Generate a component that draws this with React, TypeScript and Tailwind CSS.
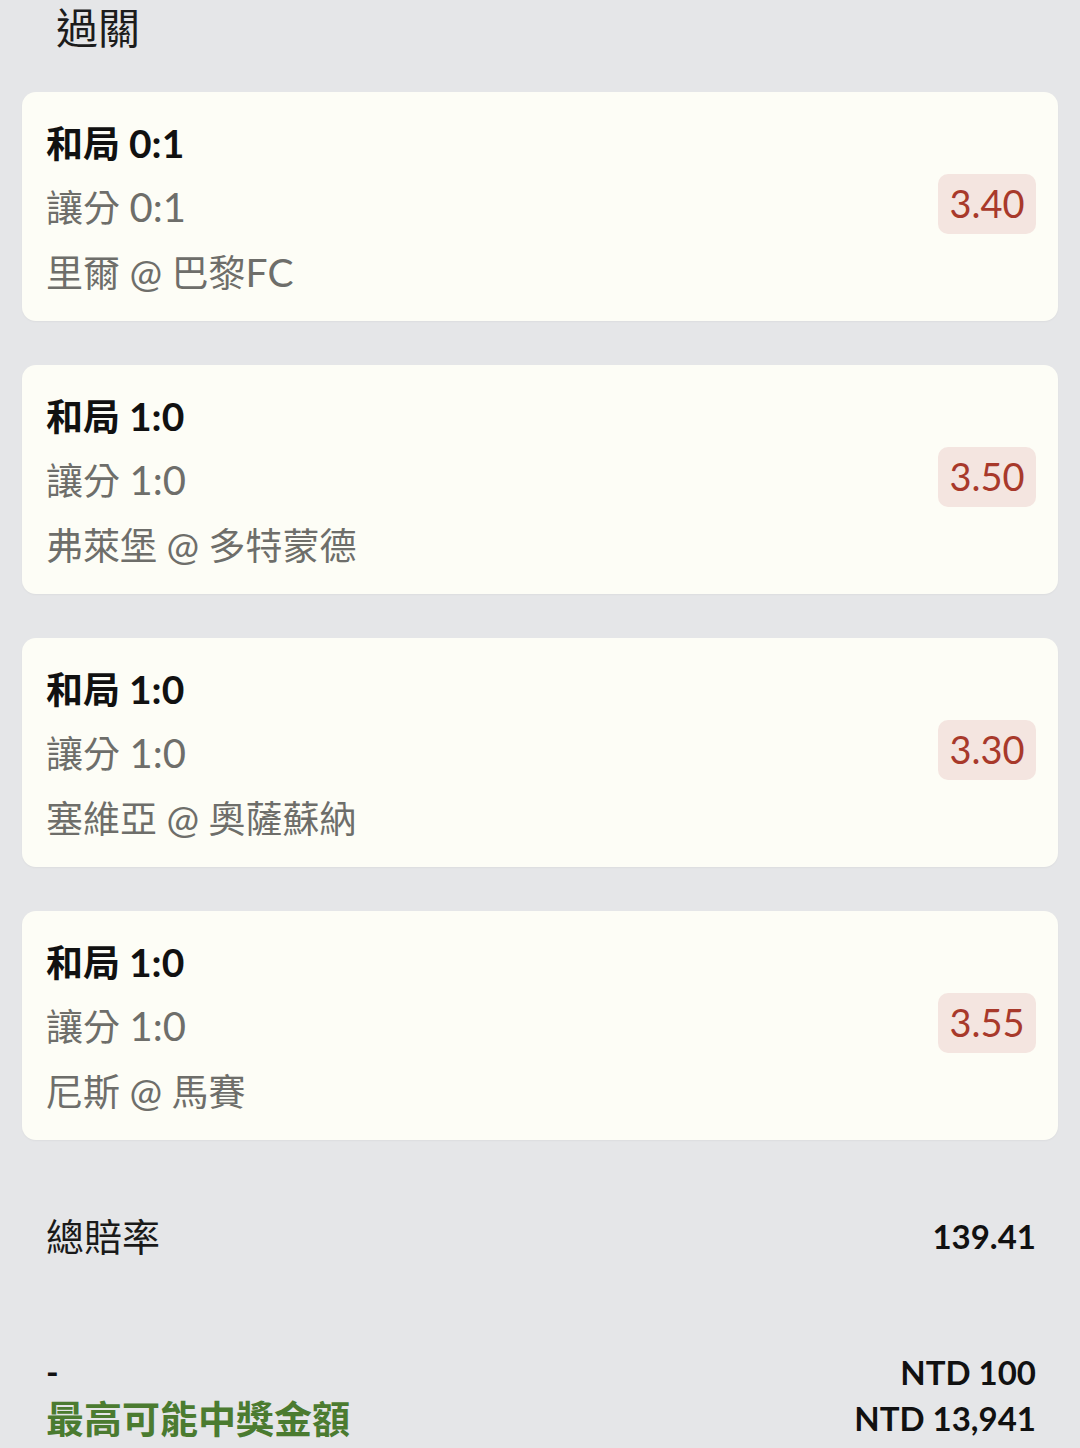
import React from "react";

const FONT = "font-['Lato','Noto_Sans_CJK_TC',sans-serif]";

type Bet = { cjkTitle: string; score: string; team1: string; team2: string; odds: string };

const bets: Bet[] = [
  { cjkTitle: "和局", score: "0:1", team1: "里爾", team2: "巴黎FC", odds: "3.40" },
  { cjkTitle: "和局", score: "1:0", team1: "弗萊堡", team2: "多特蒙德", odds: "3.50" },
  { cjkTitle: "和局", score: "1:0", team1: "塞維亞", team2: "奧薩蘇納", odds: "3.30" },
  { cjkTitle: "和局", score: "1:0", team1: "尼斯", team2: "馬賽", odds: "3.55" },
];

function Team({ name }: { name: string }) {
  const m = name.match(/^(.*?)([A-Za-z]+)$/);
  if (m) {
    return (
      <>
        {m[1]}
        <span className="text-[39px]">{m[2]}</span>
      </>
    );
  }
  return <>{name}</>;
}

function BetCard({ bet }: { bet: Bet }) {
  return (
    <div className="flex h-[229px] items-center justify-between rounded-[14px] bg-[#fdfdf6] pl-[24px] pr-[22px] shadow-[0_1px_2px_rgba(0,0,0,0.04)]">
      <div className="mt-[4px] flex flex-col">
        <div className="text-[37px] font-bold leading-[62px] text-[#111]">
          {bet.cjkTitle} <span className="text-[39px]">{bet.score}</span>
        </div>
        <div className="text-[37px] leading-[64px] text-[#6e6e6a]">
          讓分 <span className="text-[40px]">{bet.score}</span>
        </div>
        <div className="text-[37px] leading-[64px] text-[#6e6e6a]">
          {bet.team1} <span className="text-[39px]">@</span> <Team name={bet.team2} />
        </div>
      </div>
      <div className="-mt-[6px] flex h-[60px] w-[98px] items-center justify-center rounded-[10px] bg-[#f4e5e0] text-[38px] text-[#a8392b]">
        {bet.odds}
      </div>
    </div>
  );
}

export default function App() {
  return (
    <div className={`${FONT} min-h-[1448px] w-[1080px] bg-[#e5e6e8]`}>
      <div className="pl-[56px] pt-[2px] text-[42px] leading-[52px] text-[#1c1c1c]">過關</div>
      <div className="mt-[38px] flex flex-col gap-[44px] px-[22px]">
        {bets.map((b, i) => (
          <BetCard key={i} bet={b} />
        ))}
      </div>
      <div className="mt-[72px] flex items-center justify-between pl-[46px] pr-[44px]">
        <div className="text-[38px] leading-[48px] text-[#1a1a1a]">總賠率</div>
        <div className="text-[33px] font-bold leading-[48px] text-[#111]">139.41</div>
      </div>
      <div className="mt-[90px] flex items-end justify-between pl-[46px] pr-[44px]">
        <div className="flex flex-col">
          <div className="text-[34px] font-bold leading-[44px] text-[#111]">-</div>
          <div className="text-[38px] font-bold leading-[48px] text-[#4b7b30]">最高可能中獎金額</div>
        </div>
        <div className="flex flex-col items-end">
          <div className="text-[33px] font-bold leading-[44px] text-[#111]">NTD 100</div>
          <div className="text-[33px] font-bold leading-[48px] text-[#111]">NTD 13,941</div>
        </div>
      </div>
    </div>
  );
}
